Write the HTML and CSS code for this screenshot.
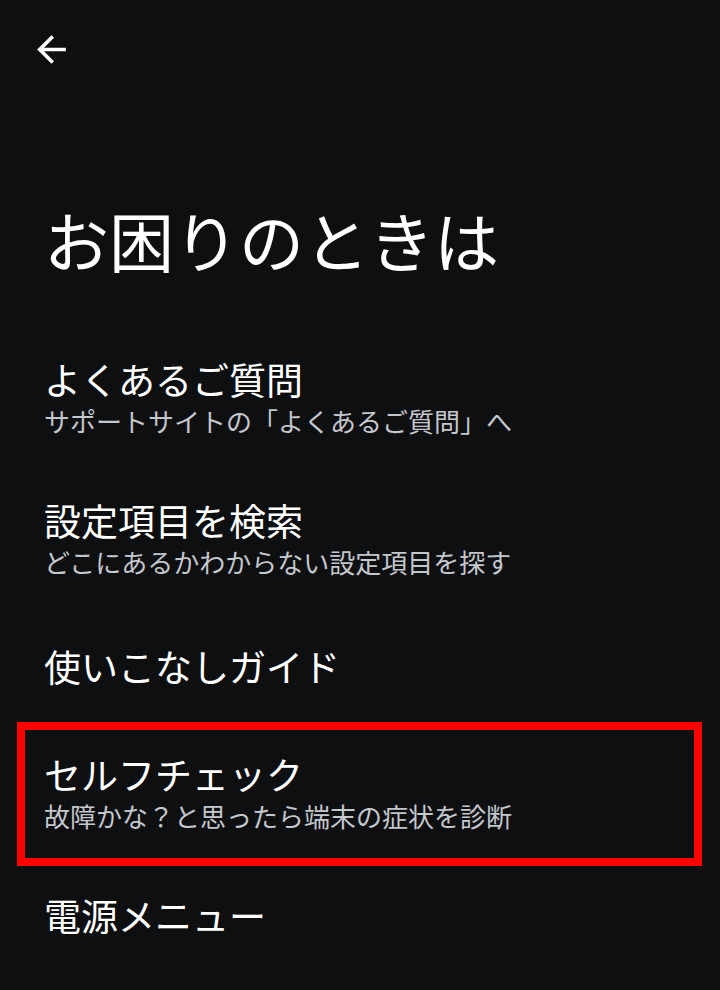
FILE: index.html
```html
<!DOCTYPE html>
<html lang="ja">
<head>
<meta charset="utf-8">
<link rel="stylesheet" href="styles.css">
</head>
<body>
<div class="screen">
  <header class="appbar">
    <svg class="back" viewBox="0 0 24 24" width="43" height="43"><path d="M20 11H7.83l5.59-5.59L12 4l-8 8 8 8 1.41-1.41L7.83 13H20v-2z" fill="#ffffff"/></svg>
  </header>
  <h1 class="page-title">お困りのときは</h1>
  <ul class="list">
    <li class="item">
      <div class="item-title">よくあるご質問</div>
      <div class="item-sub">サポートサイトの「よくあるご質問」へ</div>
    </li>
    <li class="item">
      <div class="item-title">設定項目を検索</div>
      <div class="item-sub">どこにあるかわからない設定項目を探す</div>
    </li>
    <li class="item single">
      <div class="item-title">使いこなしガイド</div>
    </li>
    <li class="item highlight">
      <div class="item-title">セルフチェック</div>
      <div class="item-sub">故障かな？と思ったら端末の症状を診断</div>
    </li>
    <li class="item">
      <div class="item-title">電源メニュー</div>
    </li>
  </ul>
</div>
</body>
</html>
```

FILE: styles.css
```css
html, body {
  margin: 0;
  padding: 0;
  background: #0e0f11;
}
body {
  width: 720px;
  height: 990px;
  overflow: hidden;
  font-family: "Noto Sans CJK JP", "Noto Sans", sans-serif;
  color: #ffffff;
}
.screen {
  display: flex;
  flex-direction: column;
}
.appbar {
  height: 71px;
  padding: 28px 0 0 30px;
  box-sizing: content-box;
}
.back {
  display: block;
}
.page-title {
  margin: 100px 0 0 0;
  padding-left: 44px;
  font-size: 65px;
  font-weight: 400;
  line-height: 80px;
  color: #ffffff;
}
.list {
  list-style: none;
  margin: 48px 0 0 0;
  padding: 0;
}
.item {
  position: relative;
  padding: 29px 0 29px 44px;
  height: 83px;
}
.item.single {
  height: 113px;
  padding-top: 0;
  padding-bottom: 0;
  display: flex;
  align-items: center;
}
.item-title {
  font-size: 37px;
  line-height: 46px;
  color: #ffffff;
}
.item-sub {
  font-size: 26px;
  line-height: 37px;
  color: #c4c7cb;
}
.highlight::after {
  content: "";
  position: absolute;
  left: 17px;
  right: 18px;
  top: 0;
  bottom: -3px;
  border: 8px solid #ff0000;
}
```
